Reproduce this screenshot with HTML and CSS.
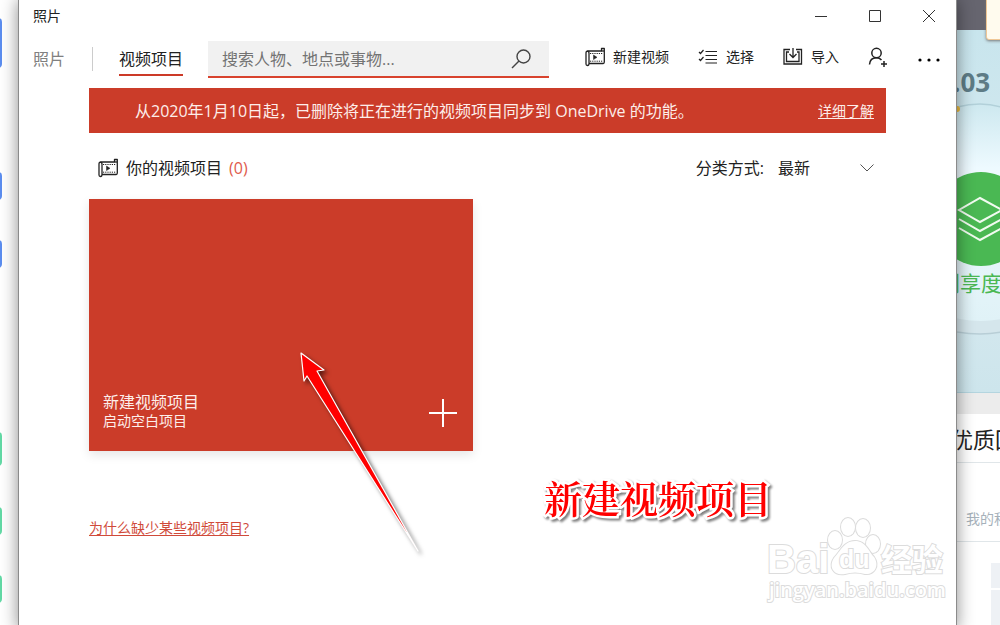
FILE: index.html
```html
<!DOCTYPE html>
<html lang="zh-CN">
<head>
<meta charset="utf-8">
<title>照片</title>
<link rel="stylesheet" href="styles.css">
</head>
<body>
<svg class="defs" aria-hidden="true">
  <symbol id="film" viewBox="0 0 20 20">
    <g fill="none" stroke="currentColor" stroke-width="1.3" stroke-linejoin="round">
      <path d="M4 16.5H18.2Q19.300 16.500 19.300 15V1.500H16.500V4H3Q1 4 1 6V17Q1 18.500 2.500 18.500Q4 18.500 4 16.500V6.500Q4 4 2.500 4"/>
      <path d="M16.500 4H19"/>
      <path d="M5 6.500H17.500M5 14.200H17.500" stroke-width="1" stroke-dasharray="1.2 1"/>
      <path d="M8.500 8V12.600L12 10.300Z" fill="currentColor" stroke-width=".5"/>
    </g>
  </symbol>
</svg>
<div class="desktop">
  <aside class="left-page" aria-hidden="true">
    <i class="tab blue t1"></i><i class="tab blue t2"></i><i class="tab blue t3"></i>
    <i class="tab green t4"></i><i class="tab green t5"></i><i class="tab green t6"></i>
  </aside>

  <main class="window">
    <header class="titlebar">
      <span class="title">照片</span>
      <div class="controls">
        <button aria-label="最小化"><svg width="14" height="14"><path d="M1 7.5H13"/></svg></button>
        <button aria-label="最大化"><svg width="14" height="14"><path d="M1.500 1.500H12.500V12.500H1.500Z"/></svg></button>
        <button aria-label="关闭"><svg width="14" height="14"><path d="M1 1L13 13M13 1L1 13"/></svg></button>
      </div>
    </header>

    <div class="toolbar">
      <nav class="tabs">
        <a href="#photos">照片</a>
        <a href="#projects" class="active">视频项目</a>
      </nav>
      <form class="search">
        <input type="text" aria-label="搜索" placeholder="搜索人物、地点或事物...">
        <button type="button" aria-label="搜索"><svg width="20" height="20" viewBox="0 0 20 20"><circle cx="12.500" cy="7.500" r="6.500"/><path d="M8 12L1 19"/></svg></button>
      </form>
      <div class="actions">
        <button><svg width="20" height="20"><use href="#film"/></svg>新建视频</button>
        <button><svg width="20" height="20" viewBox="0 0 20 20" fill="none" stroke="currentColor" stroke-width="1.200"><path d="M7.500 4.500H19M7.500 8.500H19M7.500 12.500H19M7.500 16H19"/><path d="M1 5L2.500 6.500L5.500 3M1 12L2.500 13.500L5.500 10"/></svg>选择</button>
        <button><svg width="20" height="20" viewBox="0 0 20 20" fill="none" stroke="currentColor" stroke-width="1.300"><path d="M7 2.500H1V17H18.500V2.500H13"/><path d="M6 5H3.500V14.500H16V5H14"/><path d="M10 1V10M6.500 7L10 10.500L13.500 7"/></svg>导入</button>
        <button aria-label="登录"><svg width="20" height="20" viewBox="0 0 20 20" fill="none" stroke="currentColor" stroke-width="1.500"><circle cx="8.500" cy="6" r="4.700"/><path d="M1.500 17.500Q2 10.800 8.500 10.800Q11.500 10.800 13.500 13M16 14V20M13 17H19"/></svg></button>
        <button aria-label="更多" class="more"><svg width="24" height="6" viewBox="0 0 24 6"><circle cx="3" cy="3" r="1.600"/><circle cx="12" cy="3" r="1.600"/><circle cx="21" cy="3" r="1.600"/></svg></button>
      </div>
    </div>

    <div class="content">
      <div class="banner">
        <span>从2020年1月10日起，已删除将正在进行的视频项目同步到 OneDrive 的功能。</span>
        <a href="#more">详细了解</a>
      </div>
      <div class="section-head">
        <h1><svg width="20" height="20"><use href="#film"/></svg>你的视频项目 <span>(0)</span></h1>
        <div class="sort">
          <label for="sort">分类方式:</label>
          <select id="sort"><option>最新</option></select>
          <svg width="14" height="8" aria-hidden="true"><path d="M.5.5L7 7L13.500.5"/></svg>
        </div>
      </div>
      <button class="card">
        <span class="card-text"><strong>新建视频项目</strong><small>启动空白项目</small></span>
        <svg width="28" height="28"><path d="M14 0V28M0 14H28"/></svg>
      </button>
      <a class="missing" href="#missing">为什么缺少某些视频项目?</a>
    </div>
  </main>

  <aside class="right-page">
    <div class="strip"></div>
    <div class="score">
      <b>.03</b>
      <svg class="dial" width="44" height="302" viewBox="0 0 44 302" aria-hidden="true">
        <defs><linearGradient id="glow" x1="0" y1="0" x2="0" y2="1"><stop offset="0" stop-color="#cde8ef"/><stop offset=".3" stop-color="#eefaff"/><stop offset="1" stop-color="#e0f2f7"/></linearGradient></defs>
        <circle cx="24" cy="129" r="115" fill="#d5e6ec"/>
        <circle cx="24" cy="122" r="109" fill="url(#glow)"/>
        <path d="M0 17Q24 11 44 17" fill="none" stroke="#b2d0d9" stroke-width="1.500"/>
        <path d="M0 242Q24 246 44 242" fill="none" stroke="#b8ced6" stroke-width="1.500"/>
        <circle cx="0" cy="19" r="3" fill="#efbd3e"/>
        <circle cx="24" cy="129" r="47" fill="#4ab853"/>
        <g fill="none" stroke="#f1fbf0" stroke-width="2"><path d="M23 108L45 120L23 132L2 120Z"/><path d="M2 129L23 141L45 129M2 138L23 150L45 138"/></g>
      </svg>
      <span class="share">创享度</span>
    </div>
    <div class="gap"></div>
    <div class="quality">优质回</div>
    <div class="mine">我的积</div>
    <div class="tiles"><i></i><i></i></div>
    <div class="popup"></div>
  </aside>

  <svg class="arrow" width="140" height="215" viewBox="0 0 140 215" aria-hidden="true">
    <path d="M10 8L33 25L26 26L127 206L16 31L13 36Z" fill="#f00" stroke="#fff" stroke-width="1.200" stroke-linejoin="round"/>
  </svg>
  <div class="callout">新建视频项目</div>
  <svg class="watermark" width="190" height="94" viewBox="0 0 190 94">
    <g fill="#fff" stroke="#dcdcdc" stroke-width="2">
      <text class="wm-logo" x="2" y="58">Bai</text>
      <ellipse cx="70" cy="25" rx="7" ry="9"/><ellipse cx="83" cy="12" rx="7" ry="9"/><ellipse cx="98" cy="13" rx="7" ry="9"/><ellipse cx="108" cy="29" rx="7" ry="9"/>
      <path d="M90 26C101 26 104 37 109 42C115 51 109 60 100 59Q90 56 80 59C69 61 63 52 69 43C75 37 79 26 90 26Z"/>
      <text class="wm-du" x="74" y="53">du</text>
      <text class="wm-cn" x="116" y="56">经验</text>
      <text class="wm-url" x="4" y="82">jingyan.baidu.com</text>
    </g>
  </svg>
</div>
</body>
</html>
```
FILE: styles.css
```css
* { box-sizing: border-box; }
body {
  margin: 0;
  font-family: "Open Sans", "Noto Sans CJK SC", sans-serif;
  font-size: 16px;
  font-weight: 400;
  line-height: 24px;
  color: #222;
}
button, input, select { font: inherit; color: inherit; border: 0; background: none; padding: 0; margin: 0; }
a { color: inherit; }
.defs { position: absolute; width: 0; height: 0; }

.desktop {
  position: relative;
  display: grid;
  grid-template-columns: 18px 1fr 43px;
  min-height: 100vh;
  overflow: hidden;
}

.left-page { position: relative; background: #fff; }
.tab { position: absolute; left: -8px; width: 10px; height: 28px; border-radius: 4px; }
.blue { background: #5b8def; }
.green { background: #62d9a5; }
.t1 { top: 18px; height: 50px; }
.t2 { top: 172px; }
.t3 { top: 240px; }
.t4 { top: 432px; height: 34px; }
.t5 { top: 507px; }
.t6 { top: 575px; }

.window {
  position: relative;
  z-index: 1;
  background: #fff;
  border: solid #8b8b8b;
  border-width: 0 1px;
  box-shadow: 0 0 16px rgba(0, 0, 0, .45);
}
.titlebar { display: flex; justify-content: space-between; height: 32px; }
.title { padding: 4px 0 0 14px; font-size: 14px; }
.controls { display: flex; }
.controls button { width: 54px; display: grid; place-items: center; }
.controls svg { fill: none; stroke: #333; }

.toolbar { display: flex; align-items: flex-start; padding: 9px 15px 0 14px; }
.tabs { display: flex; }
.tabs a { padding-top: 6px; height: 35px; text-decoration: none; color: #808080; }
.tabs a:first-child { padding-right: 28px; background: linear-gradient(#ccc, #ccc) right 6px / 1px 24px no-repeat; }
.tabs .active { margin: 0 25px 0 26px; color: #222; border-bottom: 2px solid #cc3a28; }
.search { flex: 1; min-width: 0; display: flex; height: 37px; background: #f1f1f1; border-bottom: 2px solid #d8432e; }
.search input { flex: 1; min-width: 0; padding-left: 14px; outline: 0; }
.search input::placeholder { color: #737373; opacity: 1; }
.search button { padding-right: 18px; display: grid; place-items: center; }
.search svg { fill: none; stroke: #444; stroke-width: 1.4; }
.actions { display: flex; gap: 29px; margin-left: 36px; height: 32px; font-size: 14px; }
.actions button { display: flex; align-items: center; gap: 8px; white-space: nowrap; }
.actions .more { padding-top: 6px; }

.content { display: flex; flex-direction: column; align-items: flex-start; padding: 10px 70px 0; }
.banner {
  width: 100%;
  min-height: 45px;
  display: flex;
  align-items: center;
  justify-content: space-between;
  padding: 0 12px 0 46px;
  background: #cb3c29;
  color: #fdeeea;
}
.banner a { font-size: 14px; text-underline-offset: 2px; }
.section-head { width: 100%; display: flex; justify-content: space-between; align-items: center; padding: 23px 12px 19px 9px; }
h1 { display: flex; align-items: center; margin: 0; font-size: 16px; font-weight: 400; }
h1 svg { margin-right: 8px; }
h1 span { margin-left: 7px; color: #e05a4c; }
.sort { display: flex; align-items: center; }
.sort select { appearance: none; width: 82px; margin-left: 14px; outline: 0; }
.sort svg { fill: none; stroke: #555; }
.card {
  width: 384px;
  max-width: 100%;
  min-height: 252px;
  display: flex;
  justify-content: space-between;
  align-items: flex-end;
  padding: 0 16px 21px 14px;
  background: #cb3c29;
  color: #fdeeea;
  text-align: left;
  box-shadow: 0 4px 10px rgba(0, 0, 0, .1);
}
.card-text { display: flex; flex-direction: column; }
.card strong { font-size: 16px; font-weight: 400; line-height: 20px; }
.card small { font-size: 14px; line-height: 18px; }
.card svg { margin-bottom: 3px; fill: none; stroke: #fff; stroke-width: 2; }
.missing { margin-top: 65px; font-size: 14px; color: #d04a3a; text-underline-offset: 2px; }

.right-page { position: relative; overflow: hidden; white-space: nowrap; }
.strip { height: 30px; background: #66656f; }
.score { height: 363px; padding-top: 36px; background: linear-gradient(#c8e5ed, #d8eaf0 60%, #cde5ec); border-bottom: 1px solid #b4d5df; }
.score b { display: block; height: 24px; margin-left: -4px; font: 700 26px/32px "Open Sans", sans-serif; color: #5e7c86; }
.dial { display: block; }
.share { display: block; margin: -122px 0 0 -18px; font-size: 21px; line-height: 26px; color: #4ab853; }
.gap { height: 21px; background: #ececec; }
.quality { height: 49px; margin-left: -6px; padding-top: 10px; font-size: 22px; line-height: 30px; border-bottom: 1px solid #e0e6e9; }
.mine { height: 79px; padding: 44px 0 0 9px; font-size: 14px; color: #a6b1ba; border-bottom: 1px solid #e0e6e9; }
.tiles { display: grid; gap: 2px; padding: 21px 0 0 34px; }
.tiles i { height: 25px; background: #eef1f5; }
.tiles i:last-child { height: 40px; }
.popup { position: absolute; top: -5px; left: 29px; width: 30px; height: 45px; background: #fffbee; border: 1px solid #f0c795; border-radius: 3px; box-shadow: 0 1px 3px #777; }

.arrow { position: absolute; z-index: 2; left: 291px; top: 345px; filter: drop-shadow(3px 3px 2px rgba(0, 0, 0, .55)); }
.callout {
  position: absolute;
  z-index: 2;
  left: 544px;
  top: 476px;
  font: 600 38px/48px "Liberation Serif", "Noto Serif CJK SC", "Noto Sans CJK SC", serif;
  color: #f00;
  -webkit-text-stroke: 5px #fff;
  paint-order: stroke fill;
  filter: drop-shadow(2px 2px 1px rgba(0, 0, 0, .5));
}
.watermark { position: absolute; z-index: 2; left: 765px; top: 515px; paint-order: stroke fill; }
.wm-logo { font: 700 40px "Liberation Sans", sans-serif; }
.wm-du { font: 700 25px "Liberation Sans", sans-serif; }
.wm-cn { font: 700 31px "Noto Sans CJK SC", sans-serif; }
.wm-url { font: 600 20px "Open Sans", sans-serif; }
```
